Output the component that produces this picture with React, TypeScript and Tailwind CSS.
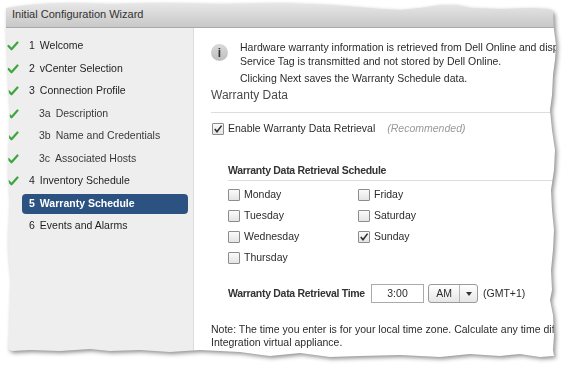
import React from "react";

const steps = [
  { num: "1", label: "Welcome", done: true, sub: false },
  { num: "2", label: "vCenter Selection", done: true, sub: false },
  { num: "3", label: "Connection Profile", done: true, sub: false },
  { num: "3a", label: "Description", done: true, sub: true },
  { num: "3b", label: "Name and Credentials", done: true, sub: true },
  { num: "3c", label: "Associated Hosts", done: true, sub: true },
  { num: "4", label: "Inventory Schedule", done: true, sub: false },
  { num: "5", label: "Warranty Schedule", done: false, sub: false, active: true },
  { num: "6", label: "Events and Alarms", done: false, sub: false },
];

const days = [
  { label: "Monday", checked: false },
  { label: "Tuesday", checked: false },
  { label: "Wednesday", checked: false },
  { label: "Thursday", checked: false },
  { label: "Friday", checked: false },
  { label: "Saturday", checked: false },
  { label: "Sunday", checked: true },
];

function GreenCheck() {
  return (
    <svg width="12" height="10" viewBox="0 0 12 10">
      <polyline points="1.5,5 4.5,8.3 10.5,1.5" fill="none" stroke="#3fa63f" strokeWidth="2.2" strokeLinecap="round" strokeLinejoin="round" />
    </svg>
  );
}

function Checkbox({ checked }: { checked: boolean }) {
  return (
    <span className="flex h-[12px] w-[12px] shrink-0 items-center justify-center rounded-[1px] border border-[#8c8c8c] bg-gradient-to-b from-[#fafafa] to-[#e4e4e4]">
      {checked && (
        <svg width="10" height="10" viewBox="0 0 10 10">
          <polyline points="1.8,5 4,7.8 8.6,1.6" fill="none" stroke="#2a2a2a" strokeWidth="1.5" />
        </svg>
      )}
    </span>
  );
}

export default function App() {
  return (
    <div className="h-[366px] w-[567px] overflow-hidden bg-white font-['Liberation_Sans',Arial,sans-serif] text-[10.5px] text-[#2b2b2b]">
      <div className="[filter:drop-shadow(2px_2px_2px_rgba(0,0,0,0.45))]">
        <div className="flex h-[366px] w-[567px] flex-col [clip-path:polygon(6px_8px,20px_6px,40px_4px,70px_3px,110px_4px,160px_3px,220px_4px,280px_3px,330px_5px,380px_9px,400px_10px,420px_8px,440px_5px,455px_5px,470px_8px,500px_9px,530px_8px,548px_9px,553px_12px,554px_30px,556px_45px,555px_60px,553px_75px,552px_95px,550px_110px,552px_130px,555px_150px,554px_170px,551px_190px,552px_210px,554px_230px,553px_250px,551px_270px,552px_290px,550px_300px,553px_315px,554px_335px,553px_350px,554px_356px,540px_357px,520px_354px,500px_356px,470px_354px,440px_357px,400px_355px,360px_356px,330px_357px,300px_353px,270px_356px,240px_352px,200px_350px,170px_352px,140px_350px,110px_351px,90px_349px,60px_351px,30px_350px,12px_351px,8px_349px,9px_330px,10px_300px,11px_280px,9px_260px,8px_240px,9px_220px,10px_200px,8px_170px,9px_140px,10px_110px,8px_80px,7px_50px,6px_30px)]">
          {/* header */}
          <div className="flex h-[28px] shrink-0 items-center border-b border-[#a9a9a9] bg-gradient-to-b from-[#ebebeb] to-[#c8c8c8] pl-[12px] pt-[2px]">
            <span className="text-[11px] text-[#333]">Initial Configuration Wizard</span>
          </div>

          <div className="flex flex-1">
            {/* steps */}
            <div className="flex w-[193px] shrink-0 flex-col gap-[2.5px] bg-[#eeeeee] pt-[8px]">
              {steps.map((s) => (
                <div key={s.num} className="flex h-[20px] items-center pl-[7px]">
                  <span className="flex w-[15px] items-center">{s.done && <GreenCheck />}</span>
                  <div
                    className={
                      s.active
                        ? "flex h-[20px] w-[166px] items-center gap-[5px] rounded-[4px] bg-[#2c5282] pl-[7px] font-bold text-white"
                        : s.sub
                          ? "flex h-[20px] w-[166px] items-center gap-[5px] pl-[17px] text-[#3a3a3a]"
                          : "flex h-[20px] w-[166px] items-center gap-[5px] pl-[7px] text-[#1e1e1e]"
                    }
                  >
                    <span>{s.num}</span>
                    <span>{s.label}</span>
                  </div>
                </div>
              ))}
            </div>

            {/* content */}
            <div className="flex flex-1 flex-col overflow-hidden whitespace-nowrap border-l border-[#dcdcdc] bg-white pl-[17px] pt-[12px]">
              <div className="flex gap-[12px] leading-[14px]">
                <div className="mt-[4px] flex h-[17px] w-[17px] shrink-0 items-center justify-center rounded-full bg-gradient-to-b from-[#dadada] to-[#bdbdbd] text-[12px] font-bold text-[#333]">
                  i
                </div>
                <div className="flex flex-col">
                  <span>Hardware warranty information is retrieved from Dell Online and displayed. Only the</span>
                  <span>Service Tag is transmitted and not stored by Dell Online.</span>
                  <span className="mt-[3px]">Clicking Next saves the Warranty Schedule data.</span>
                </div>
              </div>

              <div className="mt-[2px] text-[12px] leading-[16px] text-[#4a4a4a]">Warranty Data</div>
              <div className="mt-[9px] border-t border-[#dddddd]" />

              <div className="mt-[9px] flex h-[14px] items-center gap-[4px] pl-[1px]">
                <Checkbox checked />
                <span>Enable Warranty Data Retrieval</span>
                <span className="ml-[8px] italic text-[#9a9a9a]">(Recommended)</span>
              </div>

              <div className="flex flex-col pl-[17px]">
                <div className="mt-[27px] font-bold leading-[14px] tracking-[-0.3px] text-[#333]">Warranty Data Retrieval Schedule</div>
                <div className="mt-[3px] border-t border-[#dddddd]" />

                <div className="mt-[3px] grid grid-flow-col grid-rows-[repeat(4,21px)] grid-cols-[130px_130px]">
                  {days.map((d) => (
                    <div key={d.label} className="flex items-center gap-[4px]">
                      <Checkbox checked={d.checked} />
                      <span>{d.label}</span>
                    </div>
                  ))}
                </div>

                <div className="mt-[16px] flex h-[19px] items-center">
                  <span className="w-[143px] font-bold tracking-[-0.3px] text-[#333]">Warranty Data Retrieval Time</span>
                  <div className="flex h-[19px] w-[53px] items-center justify-center border border-[#ababab] bg-white">3:00</div>
                  <div className="ml-[4px] flex h-[19px] w-[50px] items-center rounded-[3px] border border-[#9a9a9a] bg-gradient-to-b from-[#ffffff] to-[#e6e6e6]">
                    <span className="flex w-[30px] justify-center">AM</span>
                    <span className="flex h-full flex-1 items-center justify-center border-l border-[#b4b4b4]">
                      <svg width="6" height="4" viewBox="0 0 6 4">
                        <polygon points="0,0 6,0 3,4" fill="#333" />
                      </svg>
                    </span>
                  </div>
                  <span className="ml-[5px]">(GMT+1)</span>
                </div>
              </div>

              <div className="mt-[20px] flex flex-col leading-[12.5px]">
                <span>Note: The time you enter is for your local time zone. Calculate any time difference between your time zone and the OpenManage</span>
                <span>Integration virtual appliance.</span>
              </div>
            </div>
          </div>
        </div>
      </div>
    </div>
  );
}
